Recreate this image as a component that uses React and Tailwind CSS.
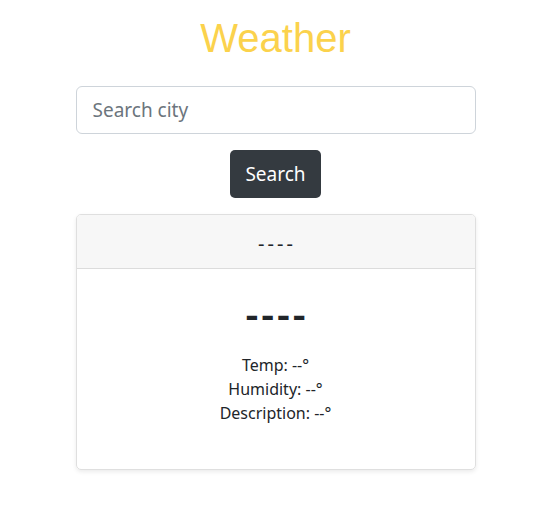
import React, { useState } from 'react';

export default function App() {
  const [city, setCity] = useState('');

  return (
    <div className="min-h-screen bg-white text-[#212529] font-['Noto_Sans',sans-serif]">
      <div className="w-[400px] mx-auto pt-[10px] flex flex-col items-center">
        <h1 className="font-['Liberation_Sans',Arial,sans-serif] text-[40px] leading-[56px] text-[#fbd24c]">
          Weather
        </h1>

        <input
          type="text"
          value={city}
          onChange={(e) => setCity(e.target.value)}
          placeholder="Search city"
          className="mt-[20px] w-full h-[48px] px-[16px] text-[19px] border border-[#ced4da] rounded-[6px] placeholder:text-[#6c757d] outline-none"
        />

        <button className="mt-[16px] h-[48px] px-[15px] rounded-[5px] bg-[#343a40] text-white text-[19px]">
          Search
        </button>

        {/* result card */}
        <div className="mt-[16px] w-full border border-[#dfdfdf] rounded-[5px] shadow-[0_2px_4px_rgba(0,0,0,0.08)] overflow-hidden">
          <div className="h-[54px] bg-[#f7f7f7] border-b border-[#dcdcdc] flex items-center justify-center text-[20px] pt-[4px] pl-[3px] tracking-[3px]">
            ----
          </div>
          <div className="flex flex-col items-center pt-[21px] pb-[44px]">
            <h2 className="text-[40px] font-semibold leading-[48px] tracking-[3px] pl-[3px]">----</h2>
            <div className="mt-[15px] text-[16px] leading-[24px] text-center">
              <p>Temp: --°</p>
              <p>Humidity: --°</p>
              <p>Description: --°</p>
            </div>
          </div>
        </div>
      </div>
    </div>
  );
}
